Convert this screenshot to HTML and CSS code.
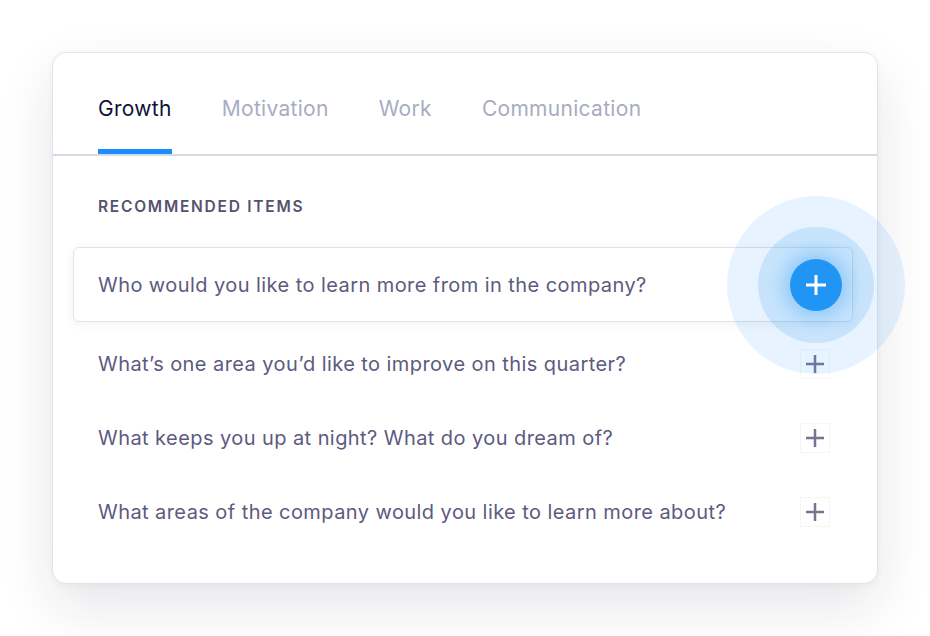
FILE: index.html
```html
<!DOCTYPE html>
<html>
<head>
<meta charset="utf-8">
<link rel="stylesheet" href="styles.css">
</head>
<body>
<div class="card">
  <nav class="tabs">
    <div class="tab active">Growth</div>
    <div class="tab">Motivation</div>
    <div class="tab">Work</div>
    <div class="tab">Communication</div>
  </nav>
  <section class="content">
    <h3 class="label">RECOMMENDED ITEMS</h3>
    <ul class="items">
      <li class="item selected">
        <span class="q">Who would you like to learn more from in the company?</span>
        <span class="add-btn">
          <span class="halo halo-outer"></span>
          <span class="halo halo-inner"></span>
          <svg class="btn-icon" width="22" height="22" viewBox="0 0 22 22"><path d="M11 1v20M1 11h20" stroke="#fff" stroke-width="3" stroke-linecap="butt" fill="none"/></svg>
        </span>
      </li>
      <li class="item">
        <span class="q">What’s one area you’d like to improve on this quarter?</span>
        <span class="add"><svg width="18" height="18" viewBox="0 0 18 18"><path d="M9 0v18M0 9h18" stroke="#737593" stroke-width="2.5" fill="none"/></svg></span>
      </li>
      <li class="item">
        <span class="q">What keeps you up at night? What do you dream of?</span>
        <span class="add"><svg width="18" height="18" viewBox="0 0 18 18"><path d="M9 0v18M0 9h18" stroke="#737593" stroke-width="2.5" fill="none"/></svg></span>
      </li>
      <li class="item">
        <span class="q">What areas of the company would you like to learn more about?</span>
        <span class="add"><svg width="18" height="18" viewBox="0 0 18 18"><path d="M9 0v18M0 9h18" stroke="#737593" stroke-width="2.5" fill="none"/></svg></span>
      </li>
    </ul>
  </section>
</div>
</body>
</html>
```
FILE: styles.css
```css
* { box-sizing: border-box; }
html, body { margin: 0; padding: 0; }
body {
  width: 930px;
  height: 636px;
  background: #ffffff;
  font-family: Inter, "Noto Sans", "Liberation Sans", sans-serif;
  padding: 52px 0 0 52px;
  overflow: hidden;
}
.card {
  width: 826px;
  height: 532px;
  background: #fff;
  border: 1px solid #e3e3ea;
  border-radius: 14px;
  box-shadow: 0 22px 55px rgba(30, 30, 60, 0.11), 0 2px 6px rgba(30, 30, 60, 0.04);
}
.tabs {
  display: flex;
  gap: 50px;
  padding-left: 45px;
  border-bottom: 2px solid #d9dbe4;
  height: 103px;
}
.tab {
  padding-top: 42px;
  line-height: 28px;
  height: 101px;
  font-size: 21px;
  letter-spacing: 0.3px;
  color: #a8acbf;
  border-bottom: 5px solid transparent;
  margin-bottom: -1px;
}
.tab.active {
  color: #0e1437;
  border-bottom-color: #1a8cff;
}
.content {
  padding: 41px 24px 0 20px;
}
.label {
  margin: 0 0 30px 25px;
  font-size: 15.5px;
  line-height: 20px;
  font-weight: 600;
  letter-spacing: 1.75px;
  color: #55526f;
}
.items {
  list-style: none;
  margin: 0;
  padding: 0;
}
.item {
  display: flex;
  align-items: center;
  justify-content: space-between;
  height: 74px;
  padding: 0 22px 0 24px;
  border: 1px solid transparent;
  border-radius: 6px;
}
.item.selected {
  height: 75px;
  margin-bottom: 5px;
  border-color: #e2e2ea;
  box-shadow: 0 2px 10px rgba(30, 30, 60, 0.06);
  padding-right: 10px;
}
.q {
  font-size: 20px;
  letter-spacing: 0.43px;
  color: #5d5a80;
}
.add {
  width: 30px;
  height: 30px;
  border: 1px solid #f6f6f9;
  display: flex;
  align-items: center;
  justify-content: center;
}
.add-btn {
  position: relative;
  width: 52px;
  height: 52px;
  border-radius: 50%;
  background: #2196f3;
  display: flex;
  align-items: center;
  justify-content: center;
  box-shadow: 0 0 18px 6px rgba(33, 150, 243, 0.35);
}
.btn-icon { position: relative; z-index: 2; }
.halo {
  position: absolute;
  border-radius: 50%;
  left: 50%;
  top: 50%;
  transform: translate(-50%, -50%);
  pointer-events: none;
}
.halo-outer {
  width: 178px;
  height: 178px;
  background: rgba(33, 150, 243, 0.11);
}
.halo-inner {
  width: 116px;
  height: 116px;
  background: rgba(33, 150, 243, 0.16);
}
```
